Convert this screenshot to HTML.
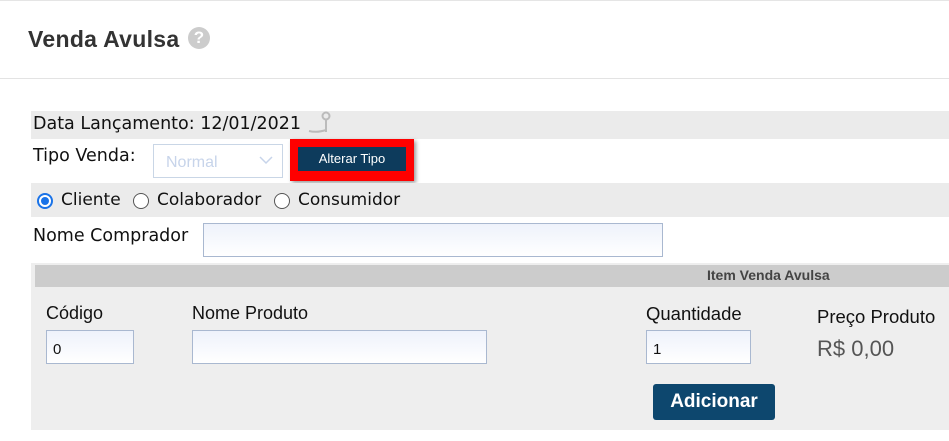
<!DOCTYPE html>
<html><head><style>
body{margin:0;width:949px;height:441px;background:#fff;font-family:"Liberation Sans","DejaVu Sans",sans-serif;color:#111;position:relative;overflow:hidden}
.a{position:absolute}
.d{font-family:"DejaVu Sans",sans-serif}
.inp{position:absolute;border:1px solid #a9b8d0;background:linear-gradient(#eef2fb,#fff);box-sizing:border-box;font-size:15px;padding:10px 6px 0}
</style></head><body>
<div class="a" style="left:0;top:0;width:949px;height:1px;background:#e5e5e5"></div>
<div class="a" style="left:28px;top:26px;font-size:23px;font-weight:bold;color:#333;letter-spacing:0.3px">Venda Avulsa</div>
<div class="a" style="left:188px;top:27px;width:22px;height:22px;border-radius:50%;background:#ccc;color:#fff;font-weight:bold;font-size:17px;text-align:center;line-height:22px">?</div>
<div class="a" style="left:0;top:78px;width:949px;height:1px;background:#e3e3e3"></div>

<div class="a" style="left:31px;top:111px;width:918px;height:28px;background:#ebebeb"></div>
<div class="a d" style="left:33px;top:114px;font-size:17.5px">Data Lançamento: 12/01/2021</div>
<svg class="a" style="left:305px;top:110px" width="30" height="26"><circle cx="21" cy="6" r="3.5" fill="none" stroke="#bbb" stroke-width="2"/><path d="M21 9 V22 M21 20 Q12 23 4 21" stroke="#bbb" stroke-width="2" fill="none"/></svg>

<div class="a d" style="left:33px;top:146px;font-size:17.5px">Tipo Venda:</div>
<div class="a" style="left:153px;top:144px;width:130px;height:34px;border:1px solid #c9d6e6;box-sizing:border-box;color:#c7d4ea;font-size:16px;padding:9px 0 0 12px">Normal</div>
<svg class="a" style="left:259px;top:155px" width="14" height="10"><path d="M1 2 L7 8 L13 2" stroke="#c7d4ea" stroke-width="1.5" fill="none"/></svg>
<div class="a" style="left:290px;top:139px;width:124px;height:42px;background:#f00;box-shadow:2px 2px 4px rgba(0,0,0,.4)"></div>
<div class="a" style="left:298px;top:147px;width:108px;height:24px;background:#0d3b5c;color:#fff;font-size:13px;text-align:center;line-height:24px">Alterar Tipo</div>

<div class="a" style="left:31px;top:183px;width:918px;height:34px;background:#ebebeb"></div>
<div class="a" style="left:37px;top:193px;width:16px;height:16px;border-radius:50%;border:2px solid #1a73e8;box-sizing:border-box;background:#fff"><div style="margin:2px;width:8px;height:8px;border-radius:50%;background:#1a73e8"></div></div>
<div class="a d" style="left:61px;top:190px;font-size:17px">Cliente</div>
<div class="a" style="left:133px;top:193px;width:16px;height:16px;border-radius:50%;border:1px solid #555;box-sizing:border-box;background:#fff"></div>
<div class="a d" style="left:157px;top:190px;font-size:17px">Colaborador</div>
<div class="a" style="left:274px;top:193px;width:16px;height:16px;border-radius:50%;border:1px solid #555;box-sizing:border-box;background:#fff"></div>
<div class="a d" style="left:298px;top:190px;font-size:17px">Consumidor</div>

<div class="a d" style="left:33px;top:226px;font-size:17.5px">Nome Comprador</div>
<div class="inp" style="left:203px;top:223px;width:460px;height:34px"></div>

<div class="a" style="left:31px;top:263px;width:918px;height:167px;background:#eeeeee"></div>
<div class="a" style="left:35px;top:265px;width:914px;height:22px;background:#cccccc"></div>
<div class="a" style="left:707px;top:267px;font-size:14px;font-weight:bold;color:#444">Item Venda Avulsa</div>

<div class="a" style="left:46px;top:303px;font-size:18px">Código</div>
<div class="a" style="left:192px;top:303px;font-size:18px">Nome Produto</div>
<div class="a" style="left:646px;top:303px;font-size:18.5px">Quantidade</div>
<div class="a" style="left:817px;top:306px;font-size:18.5px">Preço Produto</div>
<div class="inp" style="left:46px;top:330px;width:88px;height:34px">0</div>
<div class="inp" style="left:192px;top:330px;width:295px;height:34px"></div>
<div class="inp" style="left:646px;top:330px;width:105px;height:34px">1</div>
<div class="a" style="left:817px;top:336px;font-size:22px;color:#555">R$ 0,00</div>
<div class="a" style="left:653px;top:384px;width:122px;height:36px;background:#0d476e;border-radius:3px;color:#fff;font-size:19px;font-weight:bold;text-align:center;line-height:36px">Adicionar</div>
</body></html>
